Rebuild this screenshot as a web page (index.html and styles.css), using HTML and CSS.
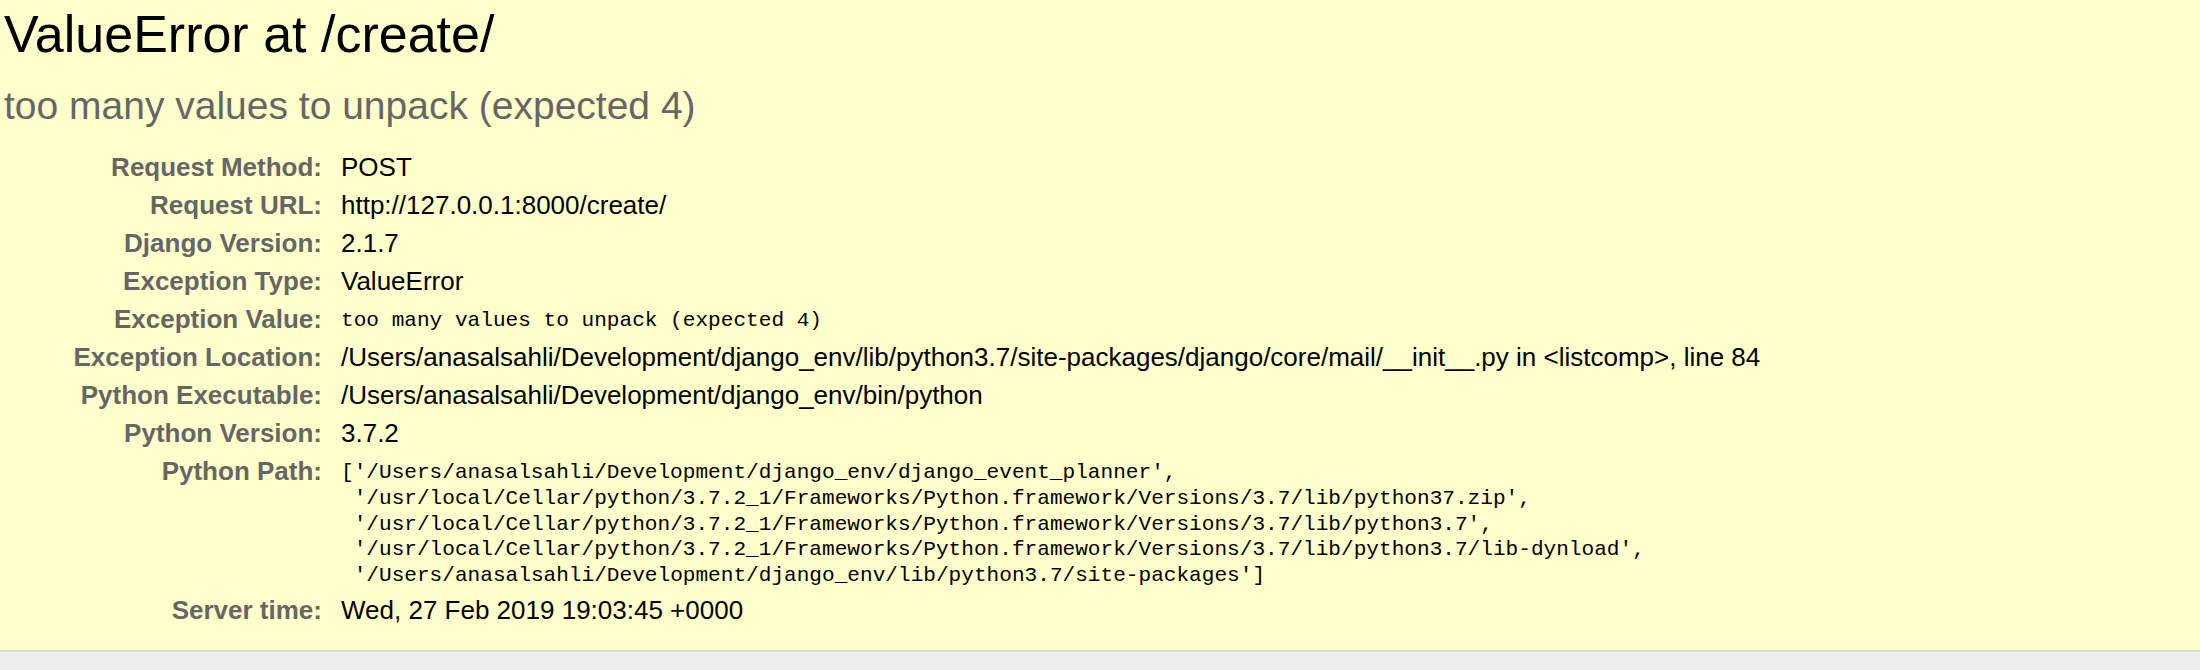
FILE: index.html
```
<!DOCTYPE html>
<html lang="en">
<head>
<meta charset="utf-8">
<title>ValueError at /create/</title>
<link rel="stylesheet" href="styles.css">
</head>
<body>
<div class="summary">
  <h1 class="title">ValueError at /create/</h1>
  <pre class="exception-value">too many values to unpack (expected 4)</pre>
  <table class="meta">
    <tbody>
      <tr><th>Request Method:</th><td>POST</td></tr>
      <tr><th>Request URL:</th><td>http://127.0.0.1:8000/create/</td></tr>
      <tr><th>Django Version:</th><td>2.1.7</td></tr>
      <tr><th>Exception Type:</th><td>ValueError</td></tr>
      <tr><th>Exception Value:</th><td><pre class="mono">too many values to unpack (expected 4)</pre></td></tr>
      <tr><th>Exception Location:</th><td>/Users/anasalsahli/Development/django_env/lib/python3.7/site-packages/django/core/mail/__init__.py in &lt;listcomp&gt;, line 84</td></tr>
      <tr><th>Python Executable:</th><td>/Users/anasalsahli/Development/django_env/bin/python</td></tr>
      <tr><th>Python Version:</th><td>3.7.2</td></tr>
      <tr><th>Python Path:</th><td><pre class="mono">['/Users/anasalsahli/Development/django_env/django_event_planner',
 '/usr/local/Cellar/python/3.7.2_1/Frameworks/Python.framework/Versions/3.7/lib/python37.zip',
 '/usr/local/Cellar/python/3.7.2_1/Frameworks/Python.framework/Versions/3.7/lib/python3.7',
 '/usr/local/Cellar/python/3.7.2_1/Frameworks/Python.framework/Versions/3.7/lib/python3.7/lib-dynload',
 '/Users/anasalsahli/Development/django_env/lib/python3.7/site-packages']</pre></td></tr>
      <tr><th>Server time:</th><td>Wed, 27 Feb 2019 19:03:45 +0000</td></tr>
    </tbody>
  </table>
</div>
<div class="traceback"></div>
</body>
</html>
```
FILE: styles.css
```
html, body {
  margin: 0;
  padding: 0;
}
body {
  font-family: "Liberation Sans", Arial, Helvetica, sans-serif;
  font-size: 26px;
  color: #000;
  background: #eee;
}
.summary {
  background: #ffc;
  padding: 5px 40px 21px 4px;
  border-bottom: 2px solid #ddd;
}
.title {
  margin: 0;
  font-size: 52px;
  font-weight: normal;
  line-height: 58px;
}
.exception-value {
  font-family: "Liberation Sans", Arial, Helvetica, sans-serif;
  font-size: 39px;
  line-height: 45px;
  color: #666;
  margin: 20px 0 20px 0;
  white-space: pre-wrap;
}
.meta {
  border: none;
  border-collapse: collapse;
  width: 100%;
  background: transparent;
}
.meta th,
.meta td {
  vertical-align: top;
  line-height: 30px;
}
.meta th {
  width: 312px;
  text-align: right;
  color: #666;
  font-weight: bold;
  padding: 4px 13px 4px 6px;
}
.meta td {
  padding: 4px 6px;
  text-align: left;
}
.mono {
  margin: 0 0 -2px 0;
  font-family: "Liberation Mono", "Courier New", monospace;
  font-size: 21.1px;
  line-height: 25.8px;
  white-space: pre-wrap;
  padding-top: 4px;
}
.traceback {
  background: #eee;
  height: 40px;
}
```
